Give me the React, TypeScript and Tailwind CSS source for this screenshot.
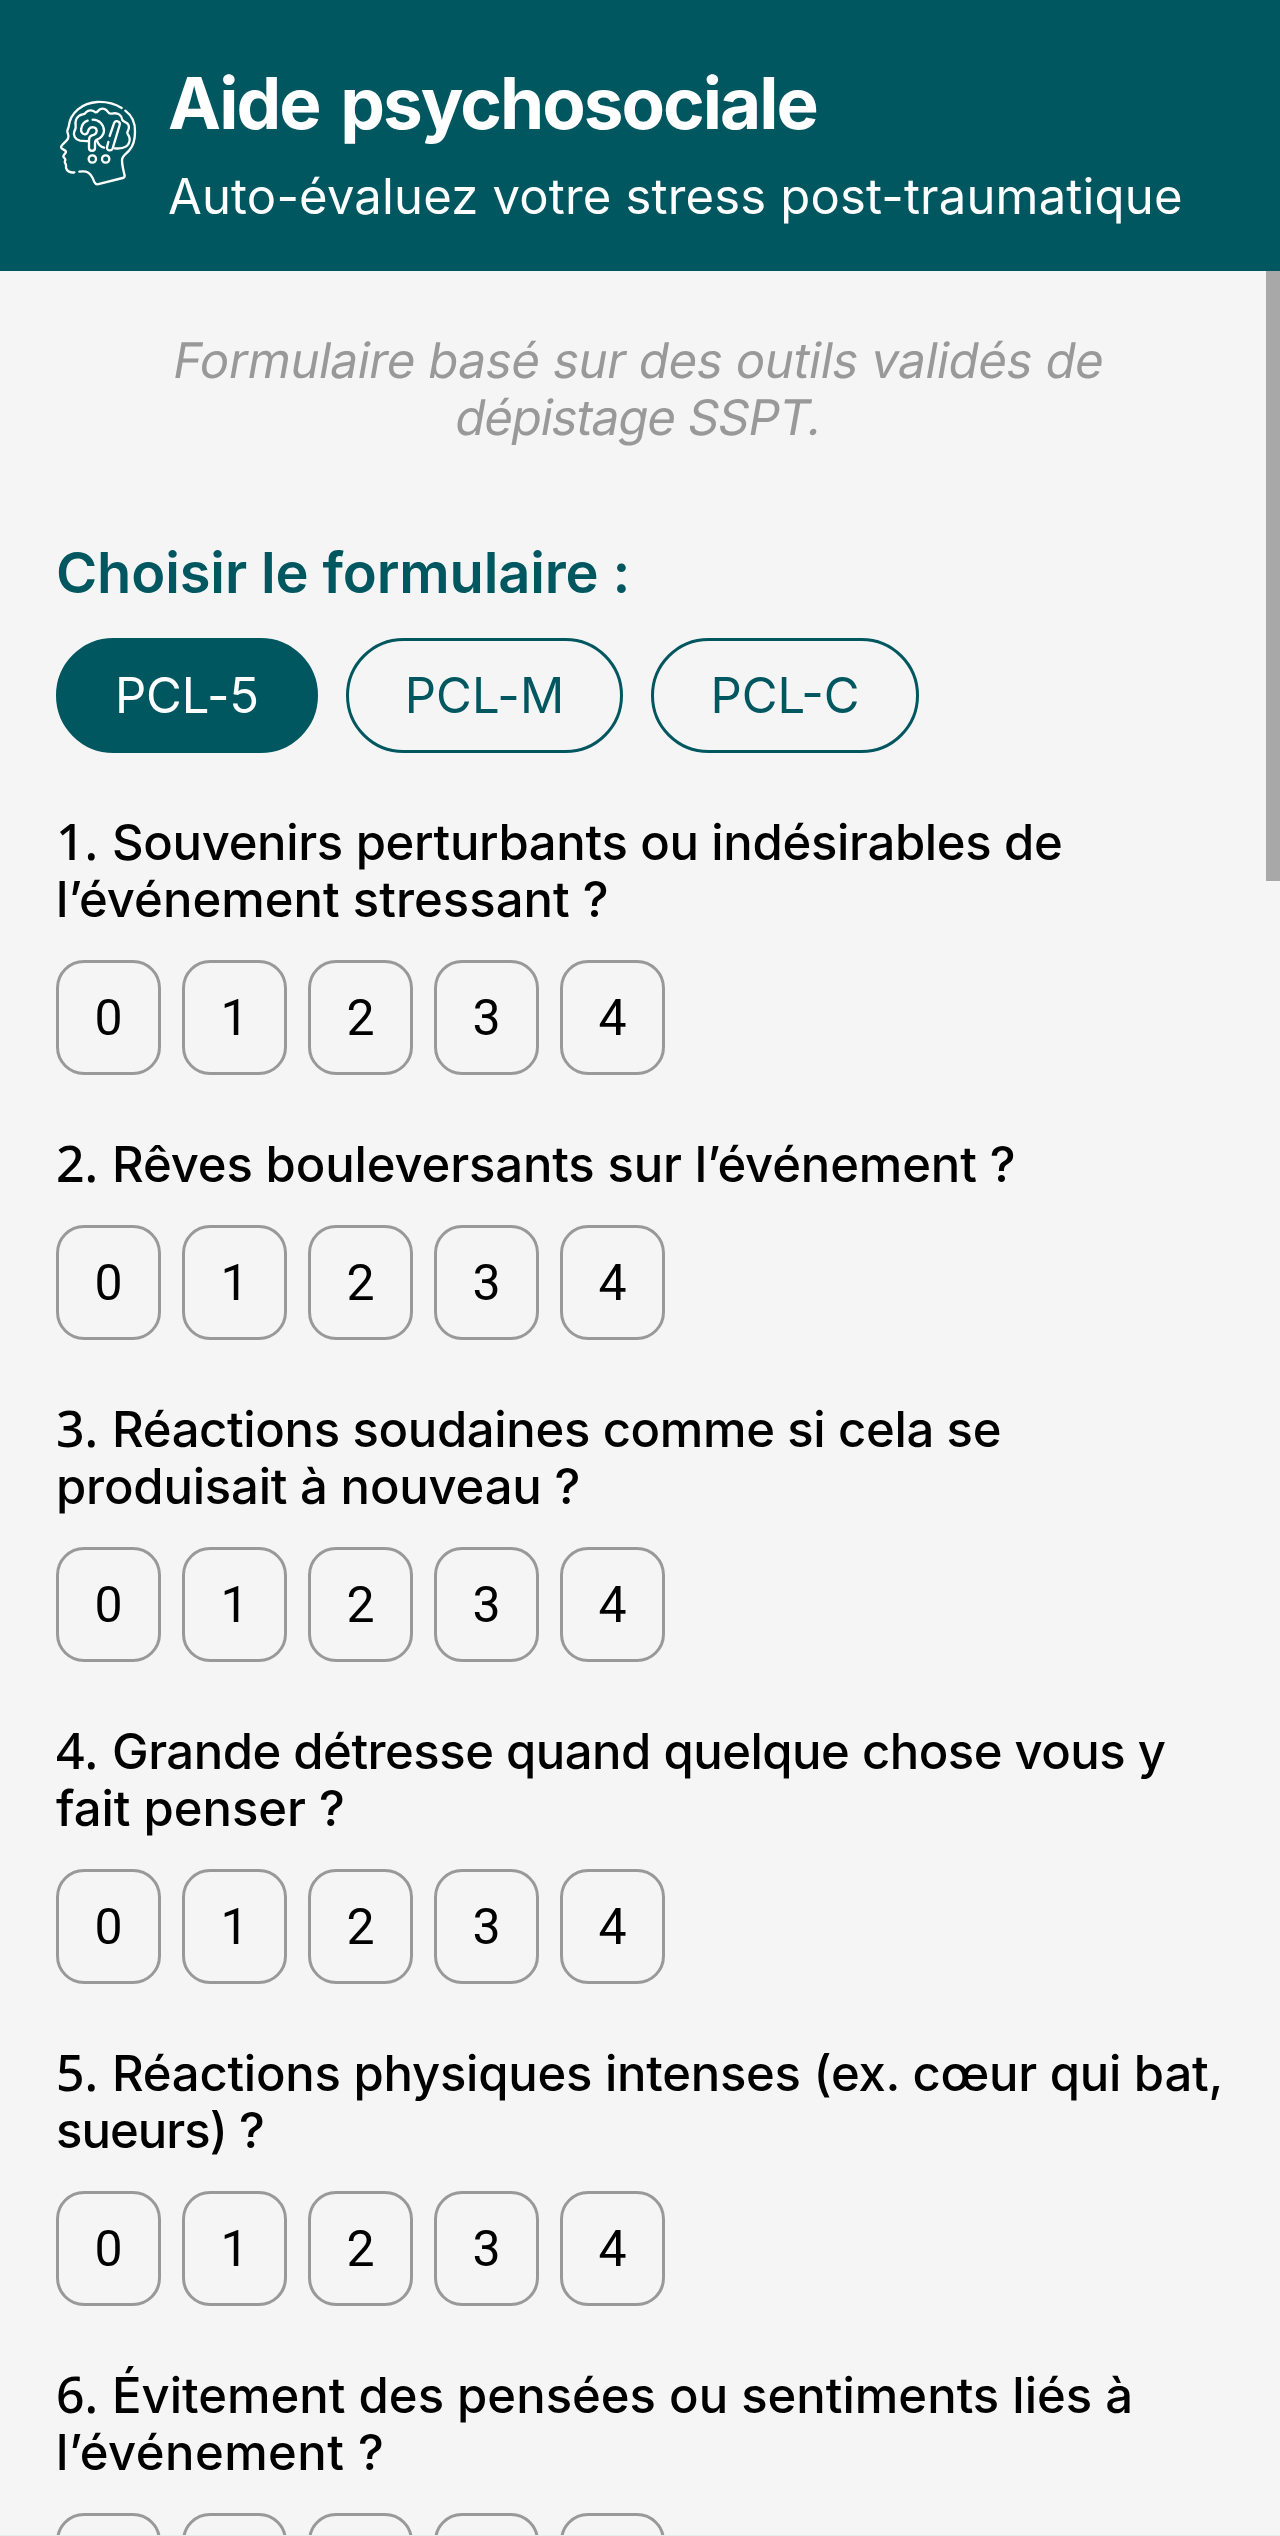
type Line = { text: string; tracking: string };
type Question = { id: number; lines: Line[] };

const questions: Question[] = [
  {
    id: 1,
    lines: [
      { text: "Souvenirs perturbants ou indésirables de", tracking: "tracking-[-0.33px]" },
      { text: "l’événement stressant ?", tracking: "tracking-[0.03px]" },
    ],
  },
  {
    id: 2,
    lines: [{ text: "Rêves bouleversants sur l’événement ?", tracking: "tracking-[-0.14px]" }],
  },
  {
    id: 3,
    lines: [
      { text: "Réactions soudaines comme si cela se", tracking: "tracking-[-0.35px]" },
      { text: "produisait à nouveau ?", tracking: "tracking-[-0.2px]" },
    ],
  },
  {
    id: 4,
    lines: [
      { text: "Grande détresse quand quelque chose vous y", tracking: "tracking-[-0.5px]" },
      { text: "fait penser ?", tracking: "tracking-[-0.03px]" },
    ],
  },
  {
    id: 5,
    lines: [
      { text: "Réactions physiques intenses (ex. cœur qui bat,", tracking: "tracking-[-0.25px]" },
      { text: "sueurs) ?", tracking: "tracking-[-0.95px]" },
    ],
  },
  {
    id: 6,
    lines: [
      { text: "Évitement des pensées ou sentiments liés à", tracking: "tracking-[0px]" },
      { text: "l’événement ?", tracking: "tracking-[0.45px]" },
    ],
  },
];

const forms = [
  { label: "PCL-5", look: "w-[262px] bg-[#005760] text-white tracking-[-0.1px]" },
  { label: "PCL-M", look: "w-[277px] text-[#005760] tracking-[0.1px]" },
  { label: "PCL-C", look: "w-[268px] text-[#005760] tracking-[0px]" },
];

function HeadIcon() {
  return (
    <svg
      viewBox="0 0 360 360"
      className="mt-[19px] h-[120px] w-[120px] shrink-0"
      fill="none"
      stroke="white"
      strokeWidth="7"
      strokeLinecap="round"
      strokeLinejoin="round"
    >
      {/* face and skull */}
      <path d="M245 84 C222 70 195 65 172 66 C128 68 90 98 86 140 C85 146 81 150 82 156 C84 162 88 168 84 176 C78 186 64 194 63 201 C63 208 76 209 78 215 C78 220 70 224 70 229 C70 233 76 235 76 239 C76 243 73 245 75 249 C80 253 78 257 78 263 C80 274 92 279 103 277" />
      <path d="M256 92 C277 108 286 130 285 155 C285 180 279 198 268 211 C259 222 247 227 246 240 C246 256 250 270 254 287 C254 291 252 293 248 294 L172 313 C167 313 165 310 163 306 C158 292 150 278 138 275 C131 274 125 274 118 275" />
      {/* brain */}
      <path d="M147 183 C136 184 128 183 120 182 C106 179 98 166 103 154 C105 149 108 146 107 140 C104 120 112 106 128 103 C134 103 136 100 138 97 C146 88 160 90 166 97 C172 98 174 92 180 88 C190 83 200 88 204 96 C208 104 214 101 220 100 C234 98 246 106 247 120 C250 127 262 124 266 136 C270 148 262 152 262 158 C262 164 268 166 269 176 C270 198 252 208 224 205" />
      <path d="M158 119 C178 119 192 134 192 153 C192 166 180 176 171 179 C166 181 165 184 165 190 L165 204 C165 215 147 215 147 204 L147 180 C147 172 150 168 156 166 C164 164 170 160 170 152 C170 141 154 138 147 147 C143 153 145 164 134 163 C125 162 122 154 124 145 C126 132 134 125 143 122" />
      <path d="M172 184 C175 194 182 200 192 203" />
      {/* tilted bar */}
      <path d="M209 168 L222 130 C226 119 242 123 239 135 L218 205 C214 215 199 212 201 202 L205 186" />
      <circle cx="157" cy="237" r="11" />
      <circle cx="197" cy="237" r="11" />
    </svg>
  );
}

function Options({ labelled }: { labelled: boolean }) {
  return (
    <div className="mt-8 flex gap-[21px]">
      {[0, 1, 2, 3, 4].map((n) => (
        <button
          key={n}
          className="flex h-[115px] w-[105px] shrink-0 items-center justify-center rounded-[28px] border-3 border-[#999999] pt-px font-['Roboto',sans-serif] text-[50px] leading-[57px]"
        >
          {labelled && n}
        </button>
      ))}
    </div>
  );
}

export default function App() {
  return (
    <div className="relative h-[2536px] w-[1280px] overflow-hidden bg-[#f5f5f5] font-['Inter',sans-serif] text-[49px] leading-[57px] text-black">
      <header className="flex h-[271px] items-start gap-2 bg-[#005760] pt-[61px] pl-10 whitespace-nowrap text-white">
        <HeadIcon />
        <div>
          <h1 className="-mt-px text-[71px] leading-[86px] font-bold tracking-[-2px] [word-spacing:6px]">
            Aide psychosociale
          </h1>
          <p className="mt-[22px] tracking-[0.17px]">Auto-évaluez votre stress post-traumatique</p>
        </div>
      </header>

      <main className="px-14 pt-[61px] whitespace-nowrap">
        <p className="flex flex-col items-center pr-2 text-[#999999]">
          <span className="origin-[0_80%] -skew-x-10 tracking-[-0.32px]">Formulaire basé sur des outils validés de</span>
          <span className="origin-[0_80%] -skew-x-10 tracking-[-1px]">dépistage SSPT.</span>
        </p>

        <h2 className="mt-[93px] text-[56px] leading-[68px] font-semibold tracking-[-0.14px] text-[#005760]">
          Choisir le formulaire :
        </h2>
        <div className="mt-[31px] flex gap-7">
          {forms.map((f) => (
            <button
              key={f.label}
              className={`flex h-[115px] items-center justify-center rounded-full border-3 border-[#005760] ${f.look}`}
            >
              {f.label}
            </button>
          ))}
        </div>

        {questions.map((q) => (
          <section key={q.id} className="mt-[61px]">
            {q.lines.map((line, i) => (
              <p key={line.text} className={`flex h-[57px] items-baseline font-medium ${line.tracking}`}>
                {i === 0 && (
                  <span className="w-[56px] shrink-0 font-['Noto_Sans',sans-serif] text-[50px] leading-[52px] tracking-normal">
                    {q.id}.
                  </span>
                )}
                <span>{line.text}</span>
              </p>
            ))}
            <Options labelled={q.id < 6} />
          </section>
        ))}
      </main>

      <div className="absolute top-[271px] right-0 h-[610px] w-[14px] bg-[#a8a8a8]" />
      <div className="absolute bottom-0 left-0 h-px w-full bg-[#e6eeec]" />
    </div>
  );
}
